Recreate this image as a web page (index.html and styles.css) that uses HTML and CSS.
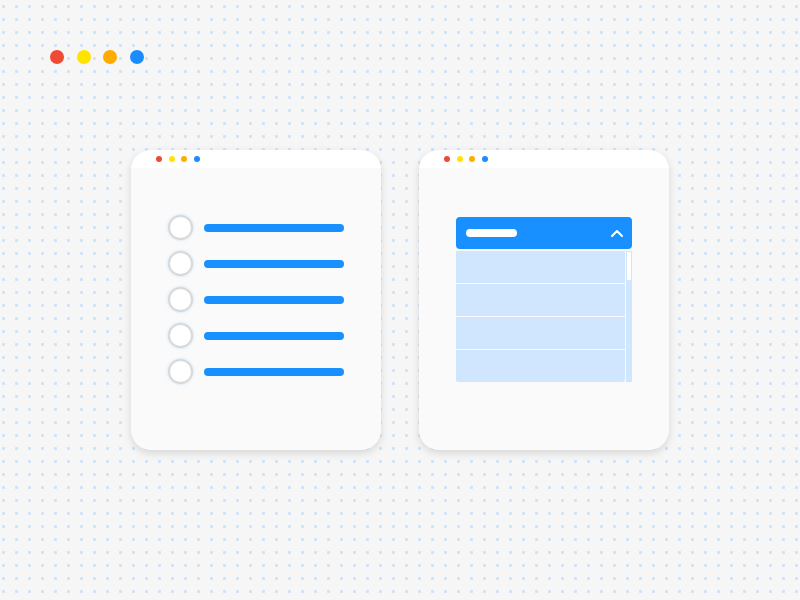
FILE: index.html
```html
<!DOCTYPE html>
<html>
<head>
<meta charset="utf-8">
<link rel="stylesheet" href="styles.css">
</head>
<body>
<div class="page">
  <div class="brand-dots">
    <span class="bdot red"></span>
    <span class="bdot yellow"></span>
    <span class="bdot orange"></span>
    <span class="bdot blue"></span>
  </div>
  <div class="cards">
    <div class="card">
      <div class="card-head">
        <span class="sdot red"></span>
        <span class="sdot yellow"></span>
        <span class="sdot orange"></span>
        <span class="sdot blue"></span>
      </div>
      <div class="card-body radios">
        <div class="radio-row"><span class="radio"></span><span class="bar"></span></div>
        <div class="radio-row"><span class="radio"></span><span class="bar"></span></div>
        <div class="radio-row"><span class="radio"></span><span class="bar"></span></div>
        <div class="radio-row"><span class="radio"></span><span class="bar"></span></div>
        <div class="radio-row"><span class="radio"></span><span class="bar"></span></div>
      </div>
    </div>
    <div class="card">
      <div class="card-head">
        <span class="sdot red"></span>
        <span class="sdot yellow"></span>
        <span class="sdot orange"></span>
        <span class="sdot blue"></span>
      </div>
      <div class="card-body select">
        <div class="select-head">
          <span class="pill"></span>
          <svg class="chev" width="12" height="8" viewBox="0 0 12 8"><polyline points="1,7 6,2 11,7" fill="none" stroke="#fff" stroke-width="2" stroke-linecap="round" stroke-linejoin="round"/></svg>
        </div>
        <div class="select-list">
          <div class="rows">
            <div class="row"></div>
            <div class="row"></div>
            <div class="row"></div>
            <div class="row"></div>
          </div>
          <div class="scroll"><div class="thumb"></div></div>
        </div>
      </div>
    </div>
  </div>
</div>
</body>
</html>
```

FILE: styles.css
```css
html, body {
  margin: 0;
  padding: 0;
}
body {
  width: 800px;
  height: 600px;
  overflow: hidden;
  background-color: #f6f6f6;
  background-image: radial-gradient(circle, #cce3fa 1.3px, transparent 1.7px);
  background-size: 13px 13px;
  background-position: -3px 0px;
  font-family: "Liberation Sans", Arial, sans-serif;
}
.page {
  padding: 50px 0 0 50px;
}
.brand-dots {
  display: flex;
  gap: 12.7px;
  height: 14px;
}
.bdot {
  width: 14px;
  height: 14px;
  border-radius: 50%;
}
.red { background: #f04a34; }
.yellow { background: #ffe400; }
.orange { background: #ffab00; }
.blue { background: #1a8cff; }

.cards {
  display: flex;
  gap: 38px;
  margin-top: 86px;
  margin-left: 81px;
}
.card {
  width: 250px;
  height: 300px;
  border-radius: 20px;
  background: #fafafa;
  box-shadow: 0 3px 8px rgba(0, 0, 0, 0.13);
  overflow: hidden;
  display: flex;
  flex-direction: column;
}
.card-head {
  height: 18px;
  background: #fff;
  display: flex;
  align-items: center;
  gap: 6.5px;
  padding-left: 25px;
  flex: none;
}
.sdot {
  width: 6px;
  height: 6px;
  border-radius: 50%;
}
.card-body {
  flex: 1;
}
.radios {
  padding: 47px 0 0 37px;
  display: flex;
  flex-direction: column;
  gap: 11px;
}
.radio-row {
  display: flex;
  align-items: center;
  gap: 11px;
  height: 25px;
}
.radio {
  width: 21px;
  height: 21px;
  border-radius: 50%;
  background: #fff;
  border: 2px solid #d9d9d9;
  box-shadow: 0 0 3px rgba(24, 144, 255, 0.25);
}
.bar {
  width: 140px;
  height: 8px;
  border-radius: 4px;
  background: #1890ff;
}
.select {
  padding: 49px 0 0 37px;
}
.select-head {
  width: 176px;
  height: 32px;
  border-radius: 4px;
  background: #1890ff;
  display: flex;
  align-items: center;
  justify-content: space-between;
  padding: 0 9px 0 10px;
  box-sizing: border-box;
}
.pill {
  width: 51px;
  height: 8px;
  border-radius: 4px;
  background: #fff;
}
.chev {
  display: block;
}
.select-list {
  margin-top: 2px;
  width: 176px;
  display: flex;
  gap: 1px;
}
.rows {
  width: 169px;
  display: flex;
  flex-direction: column;
  gap: 1px;
  border-radius: 0 0 2px 2px;
  overflow: hidden;
}
.row {
  height: 32px;
  background: #cfe6fe;
}
.scroll {
  width: 6px;
  height: 131px;
  background: #cfe6fe;
  padding: 1px;
  box-sizing: border-box;
}
.thumb {
  height: 28px;
  background: #fff;
  border-radius: 1px;
}
```
